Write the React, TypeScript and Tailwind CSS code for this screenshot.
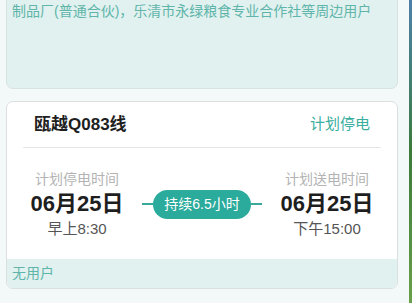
import React from 'react';

const font = { fontFamily: '"Liberation Sans", "Noto Sans CJK SC", sans-serif' };

function TimeCol({ label, date, time }: { label: string; date: string; time: string }) {
  return (
    <div className="w-[130px] flex flex-col items-center">
      <div className="text-[14px] leading-[20px] text-[#b3b3b3]">{label}</div>
      <div className="text-[22px] leading-[30px] font-bold text-[#1e1e1e]">{date}</div>
      <div className="text-[15px] leading-[20px] text-[#555]">{time}</div>
    </div>
  );
}

export default function App() {
  return (
    <div className="flex h-[303px] overflow-hidden" style={font}>
      <div className="w-[409px] bg-[#f3f8f8] pl-[6px] pr-[11px] overflow-hidden">
        {/* 上一张卡片 (被截断) */}
        <div className="-mt-[20px] h-[109px] rounded-[7px] border border-[#d7e2e1] bg-[#e1f1ef] px-[5px] pt-[19px]">
          <p className="text-[14px] leading-[22px] whitespace-nowrap text-[#5fb5aa]">
            制品厂(普通合伙)，乐清市永绿粮食专业合作社等周边用户
          </p>
        </div>

        {/* 线路卡片 */}
        <div className="mt-[12px] rounded-[7px] border border-[#dcdfe0] bg-white overflow-hidden">
          <div className="mx-[16px] px-[11px] h-[46px] flex items-center justify-between border-b border-[#e3e5e6]">
            <span className="text-[17px] font-bold text-[#1e1e1e]">瓯越Q083线</span>
            <span className="text-[15px] text-[#3aaea0]">计划停电</span>
          </div>

          <div className="flex items-center px-[5px] pt-[21px] pb-[20px]">
            <TimeCol label="计划停电时间" date="06月25日" time="早上8:30" />
            <div className="flex-1 flex items-center">
              <div className="flex-1 h-[2px] bg-[#3aa99b]" />
              <div className="h-[29px] px-[11px] rounded-full bg-[#2aab9b] text-white text-[14px] flex items-center">
                持续6.5小时
              </div>
              <div className="flex-1 h-[2px] bg-[#3aa99b]" />
            </div>
            <TimeCol label="计划送电时间" date="06月25日" time="下午15:00" />
          </div>

          <div className="h-[29px] bg-[#e1f1ef] px-[5px] flex items-center text-[14px] text-[#5fb5aa]">
            无用户
          </div>
        </div>
      </div>
      <div className="w-[3px] bg-gradient-to-b from-[#4f7fa8] via-[#3c7a3a] to-[#6aa04a]" />
    </div>
  );
}
